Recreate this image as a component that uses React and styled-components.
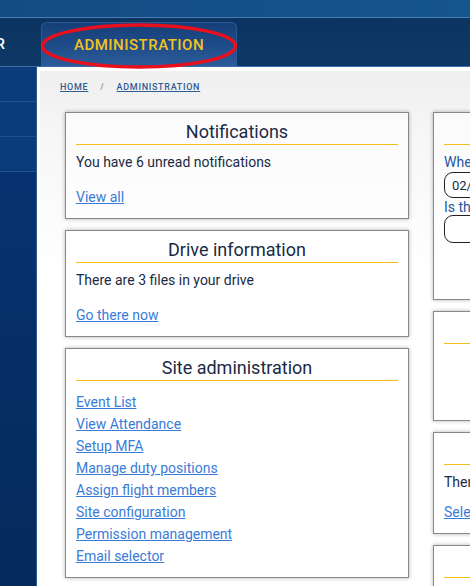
import React from 'react';
import styled, { createGlobalStyle } from 'styled-components';

const GlobalStyle = createGlobalStyle`
  html, body {
    margin: 0;
    padding: 0;
    overflow: hidden;
    background: #fff;
    font-family: Roboto, "Liberation Sans", sans-serif;
  }
`;

const Page = styled.div`
  width: 900px;
  min-height: 586px;
  display: flex;
  flex-direction: column;
`;

const TopBand = styled.div`
  height: 17px;
  background: linear-gradient(90deg, #124c83 0%, #16548c 50%, #1b5c94 100%);
  border-bottom: 1px solid #4a7db3;
`;

const NavBar = styled.nav`
  height: 48px;
  display: flex;
  align-items: flex-end;
  background: linear-gradient(180deg, #0c3460 0%, #0e3866 100%);
  border-bottom: 1px solid #3a6dab;
`;

const NavClip = styled.div`
  width: 5px;
  height: 44px;
  margin-right: 36px;
  display: flex;
  justify-content: flex-end;
  align-items: center;
  overflow: hidden;
`;

const NavLink = styled.a`
  color: #fff;
  font-size: 15px;
  font-weight: 500;
  white-space: nowrap;
  text-decoration: none;
`;

const Tab = styled.a`
  position: relative;
  width: 196px;
  height: 44px;
  display: flex;
  align-items: center;
  justify-content: center;
  box-sizing: border-box;
  border: 1px solid #2a5b98;
  border-bottom: none;
  border-radius: 6px 6px 0 0;
  background: linear-gradient(180deg, #163f78 0%, #1f4d8a 55%, #2b5c99 100%);
  color: #f3c41b;
  font-size: 15px;
  font-weight: 500;
  letter-spacing: 0.5px;
  text-decoration: none;
`;

const Annotation = styled.svg`
  position: absolute;
  left: -1px;
  top: 0;
  overflow: visible;
  pointer-events: none;
`;

const Body = styled.div`
  flex: 1;
  display: flex;
  background: #fff;
`;

const Sidebar = styled.aside`
  width: 36px;
  min-height: 519px;
  border-right: 1px solid #2b5b95;
  background: linear-gradient(180deg, #0a3474 0%, #06306a 40%, #05295a 100%);
  display: flex;
  flex-direction: column;
`;

const SideItem = styled.div`
  height: 34px;
  background: #0b3b7a;
  border-bottom: 1px solid #21508c;
`;

const Main = styled.main`
  flex: 1;
  margin: 4px 0 0 3px;
  background: linear-gradient(180deg, #efefef 0%, #f6f6f6 60px, #ffffff 200px);
`;

const Breadcrumb = styled.div`
  display: flex;
  gap: 12px;
  padding: 11px 0 0 20px;
  font-size: 9px;
  line-height: 11px;
  font-weight: 500;
  letter-spacing: 0.7px;
  text-transform: uppercase;
`;

const Crumb = styled.a`
  color: #2f5d93;
  text-decoration: underline;
`;

const Sep = styled.span`
  color: #8c8c8c;
`;

const Columns = styled.div`
  display: grid;
  grid-template-columns: 344px 344px;
  column-gap: 24px;
  align-items: start;
  padding: 19px 0 0 25px;
`;

const Column = styled.div`
  display: flex;
  flex-direction: column;
  gap: 11px;
`;

const Card = styled.section`
  box-sizing: border-box;
  min-height: ${p => p.$minHeight || 0}px;
  padding: 0 10px ${p => p.$pb ?? 12}px;
  border: 1px solid #888;
  background: rgba(255, 255, 255, 0.55);
  box-shadow: 0 0 4px rgba(0, 0, 0, 0.3);
  color: #1a2a44;
`;

const CardTitle = styled.h2`
  margin: 0;
  padding: 8px 0 2px;
  border-bottom: 1px solid #f5c116;
  font-size: 18px;
  line-height: 21px;
  font-weight: 400;
  text-align: center;
  white-space: nowrap;
`;

const Text = styled.p`
  margin: 9px 0 0;
  font-size: 14px;
  line-height: 16px;
  white-space: nowrap;
`;

const CardLink = styled.a`
  display: block;
  margin: ${p => p.$gap ?? 19}px 0 1px;
  font-size: 14px;
  line-height: 16px;
  color: #3a7bd8;
  text-decoration: underline;
  white-space: nowrap;
`;

const LinkList = styled.ul`
  list-style: none;
  margin: 10px 0 0;
  padding: 0;
  font-size: 14px;
  line-height: 22px;
  a {
    color: #3a7bd8;
    text-decoration: underline;
  }
`;

const Label = styled.label`
  display: block;
  margin-top: ${p => p.$top ?? 0}px;
  font-size: 14px;
  line-height: 16px;
  color: #1f57a0;
  white-space: nowrap;
`;

const Input = styled.div`
  box-sizing: border-box;
  height: ${p => p.$height || 26}px;
  margin-top: ${p => p.$top ?? 0}px;
  padding: 0 7px;
  display: flex;
  align-items: center;
  border: 1px solid #222;
  border-radius: 9px;
  font-size: 13px;
  color: #1a2a44;
  background: #fff;
`;

const adminLinks = [
  'Event List',
  'View Attendance',
  'Setup MFA',
  'Manage duty positions',
  'Assign flight members',
  'Site configuration',
  'Permission management',
  'Email selector',
];

export default function App() {
  return (
    <Page>
      <GlobalStyle />
      <TopBand />
      <NavBar>
        <NavClip><NavLink>CALENDAR</NavLink></NavClip>
        <Tab>
          ADMINISTRATION
          <Annotation width="196" height="46" viewBox="0 0 196 46">
            <ellipse cx="98" cy="23" rx="96.5" ry="21" fill="none" stroke="#e8101c" strokeWidth="3.5" />
          </Annotation>
        </Tab>
      </NavBar>
      <Body>
        <Sidebar>
          <SideItem />
          <SideItem />
          <SideItem />
        </Sidebar>
        <Main>
          <Breadcrumb>
            <Crumb>Home</Crumb>
            <Sep>/</Sep>
            <Crumb>Administration</Crumb>
          </Breadcrumb>
          <Columns>
            <Column>
              <Card>
                <CardTitle>Notifications</CardTitle>
                <Text>You have 6 unread notifications</Text>
                <CardLink>View all</CardLink>
              </Card>
              <Card>
                <CardTitle>Drive information</CardTitle>
                <Text>There are 3 files in your drive</Text>
                <CardLink>Go there now</CardLink>
              </Card>
              <Card $pb={10}>
                <CardTitle>Site administration</CardTitle>
                <LinkList>
                  {adminLinks.map(l => (
                    <li key={l}><a>{l}</a></li>
                  ))}
                </LinkList>
              </Card>
            </Column>
            <Column>
              <Card $minHeight={188}>
                <CardTitle>Absent?</CardTitle>
                <Label $top={9}>When will you be absent?</Label>
                <Input $top={2}>02/14/2024</Input>
                <Label $top={1}>Is there a reason?</Label>
                <Input $height={28} />
              </Card>
              <Card $minHeight={110}>
                <CardTitle>Temporary duty positions</CardTitle>
              </Card>
              <Card>
                <CardTitle>Flight contact</CardTitle>
                <Text>There are 12 members in your flight</Text>
                <CardLink $gap={14}>Select members to contact</CardLink>
              </Card>
              <Card $minHeight={80}>
                <CardTitle>Upcoming events</CardTitle>
              </Card>
            </Column>
          </Columns>
        </Main>
      </Body>
    </Page>
  );
}
